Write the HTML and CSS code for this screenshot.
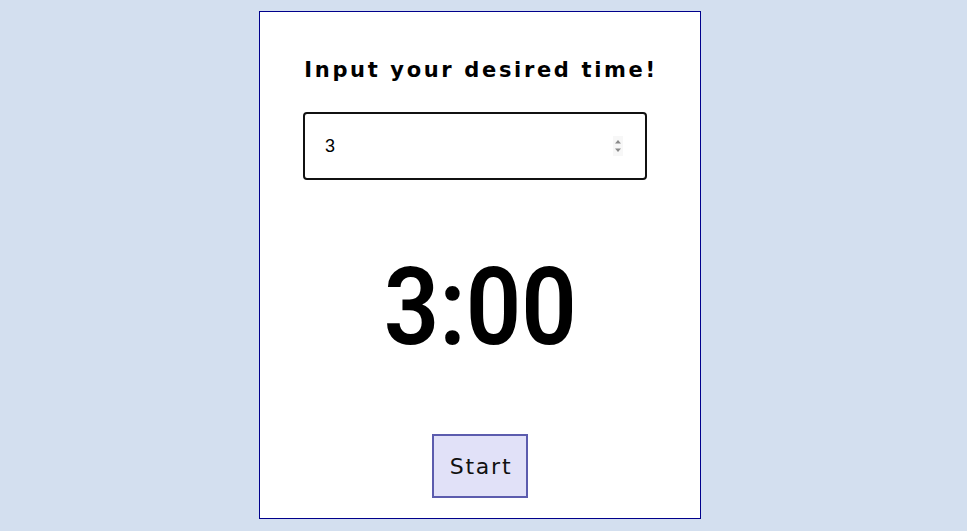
FILE: index.html
```html
<!DOCTYPE html>
<html lang="en">
<head>
<meta charset="utf-8">
<title>Timer</title>
<link rel="stylesheet" href="styles.css">
</head>
<body>
<main class="card">
  <h1 class="title">Input your desired time!</h1>
  <div class="field">
    <input class="time-input" type="number" value="3">
    <span class="spinner" aria-hidden="true">
      <svg width="10" height="20" viewBox="0 0 10 20"><path d="M2 7.5 L5 4 L8 7.5 Z" fill="#8a8a8a"/><path d="M2 12.5 L5 16 L8 12.5 Z" fill="#8a8a8a"/></svg>
    </span>
  </div>
  <div class="timer">3:00</div>
  <button class="start">Start</button>
</main>
</body>
</html>
```
FILE: styles.css
```css
html, body {
  margin: 0;
  padding: 0;
}
body {
  background: #d3dfef;
  display: flex;
  justify-content: center;
  padding: 11px 7px 12px 0;
  min-height: 531px;
  box-sizing: border-box;
}
.card {
  width: 442px;
  height: 508px;
  box-sizing: border-box;
  background: #fff;
  border: 1px solid #00008b;
  padding: 0 43px 20px;
  display: flex;
  flex-direction: column;
  align-items: center;
}
.title {
  margin: 43px 0 0;
  padding-left: 2px;
  font-family: "DejaVu Sans", sans-serif;
  font-weight: 700;
  font-size: 21px;
  line-height: 30px;
  letter-spacing: 2.65px;
  color: #000;
  white-space: nowrap;
}
.field {
  align-self: flex-start;
  position: relative;
  margin-top: 27px;
}
.time-input {
  display: block;
  width: 344px;
  height: 68px;
  box-sizing: border-box;
  border: 2px solid #111;
  border-radius: 4px;
  padding: 0 20px;
  font-family: "Liberation Sans", Arial, sans-serif;
  font-size: 18px;
  color: #000;
  background: #fff;
  outline: none;
  appearance: textfield;
  -moz-appearance: textfield;
}
.time-input::-webkit-inner-spin-button,
.time-input::-webkit-outer-spin-button {
  -webkit-appearance: none;
  margin: 0;
}
.spinner {
  position: absolute;
  left: 310px;
  top: 24px;
  width: 10px;
  height: 20px;
  background: #f7f7f7;
  display: block;
}
.spinner svg {
  display: block;
}
.timer {
  margin-top: 60px;
  font-family: Roboto, sans-serif;
  font-weight: 600;
  font-size: 108px;
  line-height: 135px;
  color: #000;
  transform: scaleX(0.9);
}
.start {
  margin-top: auto;
  width: 96px;
  height: 64px;
  box-sizing: border-box;
  background: #e1e1f8;
  border: 2px solid #5c5cae;
  border-radius: 0;
  font-family: "DejaVu Sans", sans-serif;
  font-size: 22px;
  letter-spacing: 1.8px;
  color: #111;
  padding: 0 0 0 2px;
}
```
